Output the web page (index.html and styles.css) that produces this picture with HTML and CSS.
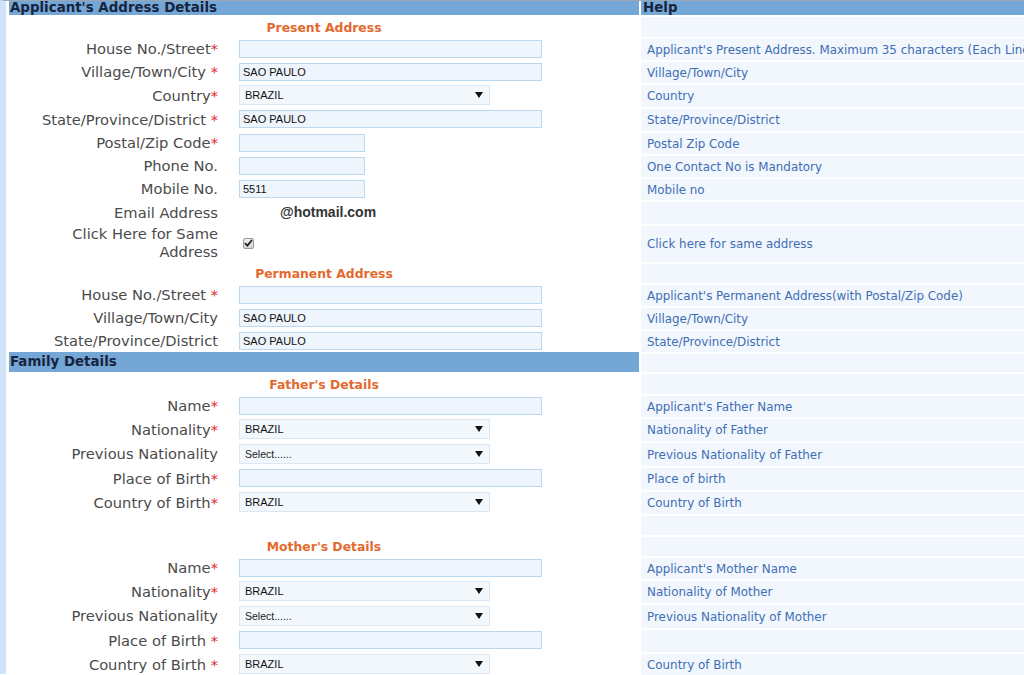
FILE: index.html
```html
<!DOCTYPE html>
<html>
<head>
<meta charset="utf-8">
<link rel="stylesheet" href="styles.css">
</head>
<body>
<div class="page">
  <div class="row head">
    <div class="sec">Applicant's Address Details</div>
    <div class="help hhead">Help</div>
  </div>

  <div class="row r22"><div class="title">Present Address</div><div class="help"></div></div>
  <div class="row"><div class="lbl"><span>House No./Street<span class="req">*</span></span></div><div class="fld"><span class="inp wide"></span></div><div class="help">Applicant's Present Address. Maximum 35 characters (Each Line)</div></div>
  <div class="row"><div class="lbl"><span>Village/Town/City <span class="req">*</span></span></div><div class="fld"><span class="inp wide">SAO PAULO</span></div><div class="help">Village/Town/City</div></div>
  <div class="row r24"><div class="lbl"><span>Country<span class="req">*</span></span></div><div class="fld"><span class="sel"><span>BRAZIL</span><svg class="arr" width="8" height="6" viewBox="0 0 8 6"><path d="M0 0H8L4 6Z"/></svg></span></div><div class="help">Country</div></div>
  <div class="row r24"><div class="lbl"><span>State/Province/District <span class="req">*</span></span></div><div class="fld"><span class="inp wide">SAO PAULO</span></div><div class="help">State/Province/District</div></div>
  <div class="row"><div class="lbl"><span>Postal/Zip Code<span class="req">*</span></span></div><div class="fld"><span class="inp short"></span></div><div class="help">Postal Zip Code</div></div>
  <div class="row"><div class="lbl"><span>Phone No.</span></div><div class="fld"><span class="inp short"></span></div><div class="help">One Contact No is Mandatory</div></div>
  <div class="row"><div class="lbl"><span>Mobile No.</span></div><div class="fld"><span class="inp short">5511</span></div><div class="help">Mobile no</div></div>
  <div class="row r24"><div class="lbl"><span>Email Address</span></div><div class="fld"><span class="email">@hotmail.com</span></div><div class="help"></div></div>
  <div class="row r38"><div class="lbl two"><span>Click Here for Same<br>Address</span></div><div class="fld"><span class="chk"><svg width="9" height="8" viewBox="0 0 9 8"><path d="M1 4.2L3.4 6.6L8 1" fill="none" stroke="#222" stroke-width="1.8"/></svg></span></div><div class="help">Click here for same address</div></div>

  <div class="row r21"><div class="title">Permanent Address</div><div class="help"></div></div>
  <div class="row"><div class="lbl"><span>House No./Street <span class="req">*</span></span></div><div class="fld"><span class="inp wide"></span></div><div class="help">Applicant's Permanent Address(with Postal/Zip Code)</div></div>
  <div class="row"><div class="lbl"><span>Village/Town/City</span></div><div class="fld"><span class="inp wide">SAO PAULO</span></div><div class="help">Village/Town/City</div></div>
  <div class="row"><div class="lbl"><span>State/Province/District</span></div><div class="fld"><span class="inp wide">SAO PAULO</span></div><div class="help">State/Province/District</div></div>

  <div class="row r20"><div class="sec">Family Details</div><div class="help"></div></div>

  <div class="row r22"><div class="title">Father's Details</div><div class="help"></div></div>
  <div class="row"><div class="lbl"><span>Name<span class="req">*</span></span></div><div class="fld"><span class="inp wide"></span></div><div class="help">Applicant's Father Name</div></div>
  <div class="row r24"><div class="lbl"><span>Nationality<span class="req">*</span></span></div><div class="fld"><span class="sel"><span>BRAZIL</span><svg class="arr" width="8" height="6" viewBox="0 0 8 6"><path d="M0 0H8L4 6Z"/></svg></span></div><div class="help">Nationality of Father</div></div>
  <div class="row r25"><div class="lbl"><span>Previous Nationality</span></div><div class="fld"><span class="sel"><span class="ph">Select......</span><svg class="arr" width="8" height="6" viewBox="0 0 8 6"><path d="M0 0H8L4 6Z"/></svg></span></div><div class="help">Previous Nationality of Father</div></div>
  <div class="row r24"><div class="lbl"><span>Place of Birth<span class="req">*</span></span></div><div class="fld"><span class="inp wide"></span></div><div class="help">Place of birth</div></div>
  <div class="row r24"><div class="lbl"><span>Country of Birth<span class="req">*</span></span></div><div class="fld"><span class="sel"><span>BRAZIL</span><svg class="arr" width="8" height="6" viewBox="0 0 8 6"><path d="M0 0H8L4 6Z"/></svg></span></div><div class="help">Country of Birth</div></div>
  <div class="row r21"><div class="blank"></div><div class="help"></div></div>

  <div class="row r21"><div class="title">Mother's Details</div><div class="help"></div></div>
  <div class="row"><div class="lbl"><span>Name<span class="req">*</span></span></div><div class="fld"><span class="inp wide"></span></div><div class="help">Applicant's Mother Name</div></div>
  <div class="row r24"><div class="lbl"><span>Nationality<span class="req">*</span></span></div><div class="fld"><span class="sel"><span>BRAZIL</span><svg class="arr" width="8" height="6" viewBox="0 0 8 6"><path d="M0 0H8L4 6Z"/></svg></span></div><div class="help">Nationality of Mother</div></div>
  <div class="row r25"><div class="lbl"><span>Previous Nationality</span></div><div class="fld"><span class="sel"><span class="ph">Select......</span><svg class="arr" width="8" height="6" viewBox="0 0 8 6"><path d="M0 0H8L4 6Z"/></svg></span></div><div class="help">Previous Nationality of Mother</div></div>
  <div class="row r24"><div class="lbl"><span>Place of Birth <span class="req">*</span></span></div><div class="fld"><span class="inp wide"></span></div><div class="help"></div></div>
  <div class="row r24"><div class="lbl"><span>Country of Birth <span class="req">*</span></span></div><div class="fld"><span class="sel"><span>BRAZIL</span><svg class="arr" width="8" height="6" viewBox="0 0 8 6"><path d="M0 0H8L4 6Z"/></svg></span></div><div class="help">Country of Birth</div></div>
</div>
</body>
</html>
```

FILE: styles.css
```css
html, body {
  margin: 0;
  padding: 0;
  background: #fff;
  overflow: hidden;
}
body {
  font-family: "DejaVu Sans", Verdana, sans-serif;
  width: 1024px;
  height: 675px;
}
.page {
  border-left: 6px solid #cfe4f8;
  border-top: 1px solid #9aa6b2;
  padding-left: 3px;
  height: 674px;
  box-sizing: border-box;
}
.row {
  display: grid;
  grid-template-columns: 222px 408px 1fr;
  height: 23px;
}
.r20 { height: 20px; }
.r21 { height: 21px; }
.r22 { height: 22px; }
.r24 { height: 24px; }
.r25 { height: 25px; }
.r38 { height: 38px; }
.row.head { height: 14px; }

.sec {
  grid-column: 1 / 3;
  background: #74a6d6;
  color: #17243d;
  font-weight: bold;
  font-size: 13.4px;
  line-height: 14px;
  padding-left: 1px;
  display: flex;
  align-items: center;
}
.head .sec { align-items: flex-end; }
.hhead {
  background: #74a6d6 !important;
  color: #17243d !important;
  font-weight: bold;
  font-size: 13.4px !important;
  margin-top: 0 !important;
  padding-left: 2px !important;
  align-items: flex-end !important;
  line-height: 14px;
}
.title {
  grid-column: 1 / 3;
  text-align: center;
  color: #e4692d;
  font-weight: bold;
  font-size: 12.4px;
  display: flex;
  align-items: center;
  justify-content: center;
  padding-top: 2px;
}
.blank { grid-column: 1 / 3; }
.lbl {
  color: #4b4b4b;
  font-size: 14.7px;
  text-align: right;
  padding-right: 13px;
  display: flex;
  align-items: center;
  justify-content: flex-end;
  white-space: nowrap;
}
.lbl.two { line-height: 18px; }
.req { color: #e0262e; }
.fld {
  display: flex;
  align-items: center;
  padding-left: 8px;
}
.help {
  margin-left: 2px;
  margin-top: 2px;
  background: #f1f7fd;
  color: #3f6eb4;
  font-size: 11.9px;
  padding-left: 6px;
  display: flex;
  align-items: center;
  white-space: nowrap;
  overflow: hidden;
}
.inp {
  display: flex;
  align-items: center;
  height: 18px;
  box-sizing: border-box;
  border: 1px solid #bcd8ef;
  background: #eef5fc;
  font-family: "Liberation Sans", Arial, sans-serif;
  font-size: 11px;
  color: #111;
  padding-left: 3px;
}
.wide { width: 303px; }
.short { width: 126px; }
.sel {
  display: flex;
  align-items: center;
  justify-content: space-between;
  width: 251px;
  height: 20px;
  box-sizing: border-box;
  border: 1px solid #dbe8f3;
  background: #f3f8fd;
  font-family: "Liberation Sans", Arial, sans-serif;
  font-size: 11px;
  color: #111;
  padding: 0 6px 0 5px;
}
.ph { font-size: 10.5px; color: #222; }
.arr { fill: #111; }
.email {
  font-family: "Liberation Sans", Arial, sans-serif;
  font-weight: bold;
  font-size: 14px;
  color: #333;
  padding-left: 41px;
}
.chk {
  display: flex;
  align-items: center;
  justify-content: center;
  width: 11px;
  height: 11px;
  box-sizing: border-box;
  margin-left: 4px;
  border: 1px solid #9a9a9a;
  border-radius: 2px;
  background: linear-gradient(#f0f0f0, #d6d6d6);
}
```
